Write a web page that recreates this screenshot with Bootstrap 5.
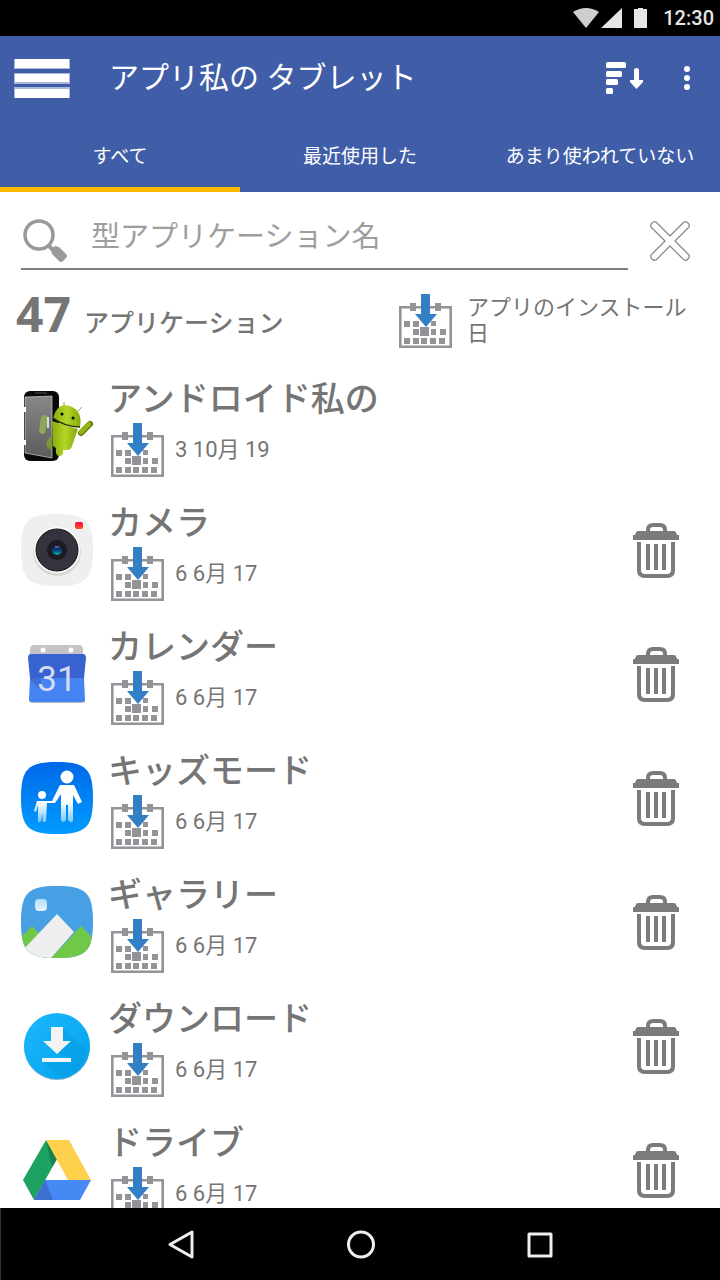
<!DOCTYPE html>
<html lang="ja">
<head>
<meta charset="utf-8">
<meta name="viewport" content="width=device-width, initial-scale=1">
<title>アプリ私の タブレット</title>
<link href="https://cdn.jsdelivr.net/npm/bootstrap@5.3.0/dist/css/bootstrap.min.css" rel="stylesheet">
<style>
  body { font-family: Roboto, "Noto Sans CJK JP", sans-serif; color: #757575; background: #fff; }
  svg { display: block; flex: none; }
  button { border: 0; background: none; padding: 0; color: inherit; }
  .status-bar { height: 36px; background: #000; color: #e6e6e6; padding-right: 6px; font-size: 20px; font-weight: 500; line-height: 36px; }
  .app-bar { height: 84px; background: #405ea8; color: #fff; padding: 0 30px 0 14px; }
  .app-title { font-size: 30px; line-height: 40px; margin-left: 38px; font-weight: 400; }
  .app-tabs { background: #405ea8; }
  .app-tabs .nav-link { height: 72px; padding: 5px 0 0; border-radius: 0; border-bottom: 5px solid transparent; color: #fff; font-size: 19px; line-height: 64px; white-space: nowrap; }
  .app-tabs .nav-link.active { border-bottom-color: #ffb900; }
  .scroller { min-height: 0; scrollbar-width: none; }
  .scroller::-webkit-scrollbar { display: none; }
  .search-row { padding: 0 29px 0 21px; gap: 21px; }
  .search-field { height: 78px; border-bottom: 2px solid #808080; padding: 22px 0 0 2px; gap: 24px; }
  .search-field input { border: 0; outline: 0; min-width: 0; padding: 0; background: none; font-size: 29px; line-height: 48px; height: 48px; color: #757575; margin-top: -8px; }
  .search-field input::placeholder { color: #9e9e9e; opacity: 1; }
  .summary { padding: 24px 16px 16px; }
  .total { font: 700 48px/48px "Noto Sans", sans-serif; margin-right: 13px; }
  .total-label { font-size: 25px; font-weight: 500; }
  .total-line { margin-top: -10px; }
  .sort-by { flex: 0 0 305px; gap: 15px; font-size: 22px; line-height: 26px; text-align: left; }
  .app-row { padding: 11px 41px 11px 21px; gap: 17px; }
  .app-name { font-size: 34px; line-height: 48px; font-weight: 500; margin: 0 0 0 -3px; }
  .app-date { font-size: 22px; line-height: 54px; gap: 11px; }
  .app-info { padding-left: 1px; }
  .nav-keys { height: 72px; background: #000; color: #eee; border-left: 1px solid #333; }
</style>
</head>
<body>
<svg width="0" height="0" class="position-absolute" aria-hidden="true">
  <defs>
    <linearGradient id="gKid" x1="0" y1="0" x2="0" y2="1"><stop offset="0" stop-color="#0068e8"/><stop offset="1" stop-color="#009cff"/></linearGradient>
    <linearGradient id="gFig" x1="0" y1="0" x2="0" y2="1"><stop offset=".45" stop-color="#fff"/><stop offset="1" stop-color="#7cc6ff"/></linearGradient>
    <linearGradient id="gRed" x1="0" y1="0" x2="0" y2="1"><stop offset="0" stop-color="#ff0052"/><stop offset="1" stop-color="#ff5a0a"/></linearGradient>
    <linearGradient id="gLens" x1="0" y1="0" x2="0" y2="1"><stop offset="0" stop-color="#10105a"/><stop offset=".5" stop-color="#083c78"/><stop offset="1" stop-color="#00b4b4"/></linearGradient>
    <linearGradient id="gSun" x1="0" y1="0" x2="0" y2="1"><stop offset="0" stop-color="#b5dcfb"/><stop offset="1" stop-color="#e6f3fd"/></linearGradient>
    <linearGradient id="gDroid" x1="0" y1="0" x2="1" y2="0"><stop offset="0" stop-color="#8aac0c"/><stop offset=".5" stop-color="#b2d625"/><stop offset="1" stop-color="#85a80b"/></linearGradient>
    <linearGradient id="gDoor" x1="0" y1="0" x2="0" y2="1"><stop offset="0" stop-color="#888"/><stop offset="1" stop-color="#5c5c5c"/></linearGradient>
    <linearGradient id="gDown" x1="0" y1="0" x2="1" y2="1"><stop offset="0" stop-color="#1db8fb"/><stop offset="1" stop-color="#00a2ee"/></linearGradient>
    <clipPath id="squircle"><path d="M0 36C0 7 7 0 36 0S72 7 72 36 65 72 36 72 0 65 0 36Z"/></clipPath>
  </defs>
  <symbol id="cal" viewBox="0 0 53 54">
    <path fill="none" stroke="#939498" stroke-width="2.600" d="M1.300 13.200H51.700V52.700H1.300Z"/>
    <path fill="#939498" d="M11 9h6v8h-6zM36 9h6v8h-6zM5 27h6v6H5zM14 27h6v6h-6zM32 27h5v5h-5zM14 35h6v6h-6zM21 33h9v9h-9zM32 35h5v6h-5zM41 35h6v6h-6zM5 44h6v6H5zM14 44h6v6h-6zM22 44h6v6h-6zM31 44h6v6h-6zM40 44h6v6h-6z"/>
    <path fill="#337fc3" d="M22 0h9v20h7L27 33 16 20h6z"/>
  </symbol>
  <symbol id="trash" viewBox="0 0 46 55">
    <path fill="none" stroke="#7b7b7b" stroke-width="4" d="M15 9V7Q15 2 20 2H27Q32 2 32 7V9"/>
    <path fill="#7b7b7b" d="M5 8H41Q43 8 44 12H46V17H0V12H2Q3 8 5 8ZM13 21h4v26h-4zM21 21h4v26h-4zM29 21h4v26h-4z"/>
    <path fill="none" stroke="#7b7b7b" stroke-width="4" d="M6 19V47Q6 53 12 53H34Q40 53 40 47V19"/>
  </symbol>
</svg>

<div class="d-flex flex-column vh-100 overflow-hidden">
  <div class="status-bar flex-shrink-0 d-flex align-items-center justify-content-end">
    <svg width="74" height="20" viewBox="0 0 74 20" class="me-3" aria-hidden="true">
      <path fill="#cfcfcf" d="M0 4Q13-4 26 4L13 20Z"/><path fill="#e6e6e6" d="M49 0V20H28ZM61 1h4V0h5v1h4v19H61z"/>
    </svg>
    <span>12:30</span>
  </div>

  <header class="app-bar flex-shrink-0 d-flex align-items-center">
    <button type="button" aria-label="メニュー">
      <svg width="57" height="39" viewBox="0 0 57 39"><path fill="#a9b7dc" d="M0 0h56v10H0zM0 14h56v11H0zM0 28h56v11H0z"/><path fill="#fff" d="M1 0h54v9H1zM1 15h54v8H1zM1 30h54v9H1z"/></svg>
    </button>
    <h1 class="app-title mb-0 flex-grow-1">アプリ私の タブレット</h1>
    <button type="button" aria-label="並べ替え">
      <svg width="37" height="32" viewBox="0 0 37 32" fill="#fff"><rect width="20" height="6" rx="1.500"/><rect y="9" width="16" height="6" rx="1.500"/><rect y="17" width="12" height="6" rx="1.500"/><rect y="26" width="7" height="6" rx="1.500"/><path d="M28 8Q28 6 30.500 6T33 8V18H37V20L30.500 27 24 20V18H28Z"/></svg>
    </button>
    <button type="button" aria-label="その他">
      <svg width="47" height="26" viewBox="0 0 47 26" fill="#fff"><circle cx="44" cy="4" r="3"/><circle cx="44" cy="13" r="3"/><circle cx="44" cy="22" r="3"/></svg>
    </button>
  </header>

  <nav class="app-tabs flex-shrink-0 nav nav-justified flex-nowrap">
    <a class="nav-link active w-100" href="#" aria-current="page">すべて</a>
    <a class="nav-link w-100" href="#">最近使用した</a>
    <a class="nav-link w-100" href="#">あまり使われていない</a>
  </nav>

  <main class="scroller flex-grow-1 overflow-auto">
    <form class="search-row d-flex">
      <div class="search-field d-flex align-items-center flex-grow-1">
        <svg width="44" height="44" viewBox="0 0 44 44" aria-hidden="true"><circle cx="16" cy="16" r="14" fill="none" stroke="#999" stroke-width="3.500"/><path d="M25 26L31 32" stroke="#999" stroke-width="4"/><path fill="#999" d="M28 31L32 27 36 28 43 35Q45 37 43 39L40 42Q38 44 36 42L29 35Z"/></svg>
        <input class="flex-grow-1" type="text" placeholder="型アプリケーション名" aria-label="型アプリケーション名">
      </div>
      <button type="reset" aria-label="消去" class="pt-4 mt-1 align-self-start">
        <svg width="42" height="42" viewBox="0 0 42 42"><path fill="none" stroke="#858585" stroke-width="1.200" stroke-linejoin="round" d="M21 16L35 2Q37 1 39 3T40 7L26 21 40 35Q41 37 39 39T35 40L21 26 7 40Q5 41 3 39T2 35L16 21 2 7Q1 5 3 3T7 2Z"/></svg>
      </button>
    </form>

    <section class="summary d-flex align-items-center">
      <div class="total-line flex-grow-1 d-flex align-items-baseline text-nowrap"><span class="total">47</span><span class="total-label">アプリケーション</span></div>
      <button type="button" class="sort-by d-flex align-items-center">
        <svg width="53" height="54"><use href="#cal"/></svg><span>アプリのインストール日</span>
      </button>
    </section>

    <ul class="list-unstyled mb-0">
      <li class="app-row d-flex align-items-center">
        <svg width="72" height="72" viewBox="0 0 72 72" aria-hidden="true">
          <rect x="3" y="1" width="35" height="70" rx="6" fill="#080808"/><path d="M14 3h12" stroke="#555"/>
          <path d="M4 7L31 6V68L4 63Z" fill="url(#gDoor)" stroke="#ccc" stroke-width=".7"/><path d="M4 17v5M4 50v5" stroke="#fff" stroke-width="2"/>
          <path d="M20 27Q26 22 27 29L24 43Q20 46 18 41Z" fill="#8da85c"/><path d="M27 27V38" stroke="#ddd" stroke-width="2"/><path d="M30 47Q24 50 26 57L31 61Z" fill="#7c982f"/>
          <path d="M31 31L57 39 51 56Q50 60 46 60H42Q43 66 38 66 34 65 35 58L32 56Z" fill="url(#gDroid)"/>
          <path d="M32 28Q36 12 49 16 62 21 59 37Q44 37 32 28Z" fill="url(#gDroid)"/><path d="M32 28Q44 37 59 37" fill="none" stroke="#263000" stroke-width="1.500"/>
          <path d="M43 17V12M56 22L61 17" stroke="#91b516"/><circle cx="41" cy="24" r="1.500"/><circle cx="52" cy="28" r="1.500"/>
          <path d="M60 43L69 34" stroke="#526e00" stroke-width="6" stroke-linecap="round"/><path d="M60 42L68 34" stroke="#91b516" stroke-width="5" stroke-linecap="round"/>
        </svg>
        <div class="app-info flex-grow-1"><h2 class="app-name">アンドロイド私の</h2>
          <div class="app-date d-flex"><svg width="53" height="54"><use href="#cal"/></svg><span>3 10月 19</span></div></div>
      </li>
      <li class="app-row d-flex align-items-center">
        <svg width="72" height="72" viewBox="0 0 72 72" aria-hidden="true"><g clip-path="url(#squircle)"><path fill="#efefef" d="M0 0h72v72H0z"/><circle cx="36" cy="38" r="24" fill="#d8d8d8"/></g>
          <circle cx="36" cy="36" r="23" fill="#fff"/><circle cx="36" cy="36" r="21" fill="#35333d" stroke="#111" /><circle cx="36" cy="36" r="10" fill="#1b1b20"/><circle cx="36" cy="36" r="5" fill="url(#gLens)"/><path d="M34 33h4" stroke="#a0a0c8"/><rect x="54" y="8" width="8" height="7" rx="2" fill="url(#gRed)"/></svg>
        <div class="app-info flex-grow-1"><h2 class="app-name">カメラ</h2>
          <div class="app-date d-flex"><svg width="53" height="54"><use href="#cal"/></svg><span>6 6月 17</span></div></div>
        <button type="button" aria-label="カメラを削除"><svg width="46" height="55"><use href="#trash"/></svg></button>
      </li>
      <li class="app-row d-flex align-items-center">
        <svg width="72" height="72" viewBox="0 0 72 72" aria-hidden="true"><path fill="#c4c4c4" d="M9 12Q9 7 13 7H58Q62 7 62 12V18H9Z"/><path fill="#bbb" d="M8 62H64V64Q63 65 61 65H11Q8 65 8 62Z"/><circle cx="22" cy="12" r="2.500" fill="#fff"/><circle cx="50" cy="12" r="2.500" fill="#fff"/>
          <path fill="#3762d0" d="M10 16H62Q65 16 65 20L63 40H9L7 20Q7 16 10 16Z"/><path fill="#4683f2" d="M9 40H63L64 61Q64 64 61 64H11Q8 64 8 61Z"/><path fill="#3c70d8" d="M9 40H20V52L9 42Z"/>
          <text x="36" y="53" text-anchor="middle" font-family="Roboto, sans-serif" font-weight="400" font-size="35" fill="#d3dcee">31</text></svg>
        <div class="app-info flex-grow-1"><h2 class="app-name">カレンダー</h2>
          <div class="app-date d-flex"><svg width="53" height="54"><use href="#cal"/></svg><span>6 6月 17</span></div></div>
        <button type="button" aria-label="カレンダーを削除"><svg width="46" height="55"><use href="#trash"/></svg></button>
      </li>
      <li class="app-row d-flex align-items-center">
        <svg width="72" height="72" viewBox="0 0 72 72" aria-hidden="true"><path clip-path="url(#squircle)" fill="url(#gKid)" d="M0 0h72v72H0z"/><circle cx="46" cy="15" r="6.500" fill="#fff"/><circle cx="21" cy="33" r="4" fill="#fff"/>
          <path fill="url(#gFig)" d="M39 23H53L61 40 57 42 52 33V58Q52 61 49 60L47 58V43H45V58Q42 62 40 58V32L34 41H26L25 59Q22 62 21.500 58V51L20 59Q17 62 17 58V43L15 50 13 49 16 39H31Z"/></svg>
        <div class="app-info flex-grow-1"><h2 class="app-name">キッズモード</h2>
          <div class="app-date d-flex"><svg width="53" height="54"><use href="#cal"/></svg><span>6 6月 17</span></div></div>
        <button type="button" aria-label="キッズモードを削除"><svg width="46" height="55"><use href="#trash"/></svg></button>
      </li>
      <li class="app-row d-flex align-items-center">
        <svg width="72" height="72" viewBox="0 0 72 72" aria-hidden="true"><g clip-path="url(#squircle)"><path fill="#479fe4" d="M0 0h72v72H0z"/><path fill="#6fc848" d="M-1 52L11 40 24 53V72H-1ZM30 72L60 40 73 53V72Z"/><path fill="#efefef" d="M0 66L36 28 53 46 30 72H0Z"/></g><rect x="14" y="13" width="12" height="12" rx="4" fill="url(#gSun)"/></svg>
        <div class="app-info flex-grow-1"><h2 class="app-name">ギャラリー</h2>
          <div class="app-date d-flex"><svg width="53" height="54"><use href="#cal"/></svg><span>6 6月 17</span></div></div>
        <button type="button" aria-label="ギャラリーを削除"><svg width="46" height="55"><use href="#trash"/></svg></button>
      </li>
      <li class="app-row d-flex align-items-center">
        <svg width="72" height="72" viewBox="0 0 72 72" aria-hidden="true"><circle cx="36" cy="37" r="33" fill="#7fb4cc"/><circle cx="36" cy="36" r="33" fill="url(#gDown)"/><path fill="#0496da" opacity=".4" d="M42 18L66 41Q61 62 41 68L22 52 50 48 36 42Z"/><path fill="#f3f3f3" d="M30 17H42V31H50L36 44 22 31H30ZM21 48H50V52H21Z"/></svg>
        <div class="app-info flex-grow-1"><h2 class="app-name">ダウンロード</h2>
          <div class="app-date d-flex"><svg width="53" height="54"><use href="#cal"/></svg><span>6 6月 17</span></div></div>
        <button type="button" aria-label="ダウンロードを削除"><svg width="46" height="55"><use href="#trash"/></svg></button>
      </li>
      <li class="app-row d-flex align-items-center">
        <svg width="72" height="72" viewBox="0 0 72 72" aria-hidden="true"><path fill="#1da261" d="M25 6L36 25 13 66 2 46Z"/><path fill="#16834f" d="M25 6L36 25 31 33Z"/><path fill="#ffd04b" d="M25 6H48L70 46H47Z"/><path fill="#4688f4" d="M24 46H70L59 66H13Z"/><path fill="#3b70ce" d="M24 46L32 66H13Z"/></svg>
        <div class="app-info flex-grow-1"><h2 class="app-name">ドライブ</h2>
          <div class="app-date d-flex"><svg width="53" height="54"><use href="#cal"/></svg><span>6 6月 17</span></div></div>
        <button type="button" aria-label="ドライブを削除"><svg width="46" height="55"><use href="#trash"/></svg></button>
      </li>
    </ul>
  </main>

  <footer class="nav-keys flex-shrink-0 d-flex justify-content-center align-items-center">
    <button type="button" class="w-25 d-flex justify-content-center" aria-label="戻る"><svg width="28" height="30" viewBox="0 0 28 30"><path fill="none" stroke="#eee" stroke-width="3" stroke-linejoin="round" d="M25 3V28L3 15.500Z"/></svg></button>
    <button type="button" class="w-25 d-flex justify-content-center" aria-label="ホーム"><svg width="30" height="30" viewBox="0 0 30 30"><circle cx="15" cy="15.500" r="12.500" fill="none" stroke="#eee" stroke-width="3"/></svg></button>
    <button type="button" class="w-25 d-flex justify-content-center" aria-label="最近"><svg width="26" height="30" viewBox="0 0 26 30"><path fill="none" stroke="#eee" stroke-width="3" stroke-linejoin="round" d="M2 5H24V27H2Z"/></svg></button>
  </footer>
</div>
<script src="https://cdn.jsdelivr.net/npm/bootstrap@5.3.0/dist/js/bootstrap.bundle.min.js"></script>
</body>
</html>
